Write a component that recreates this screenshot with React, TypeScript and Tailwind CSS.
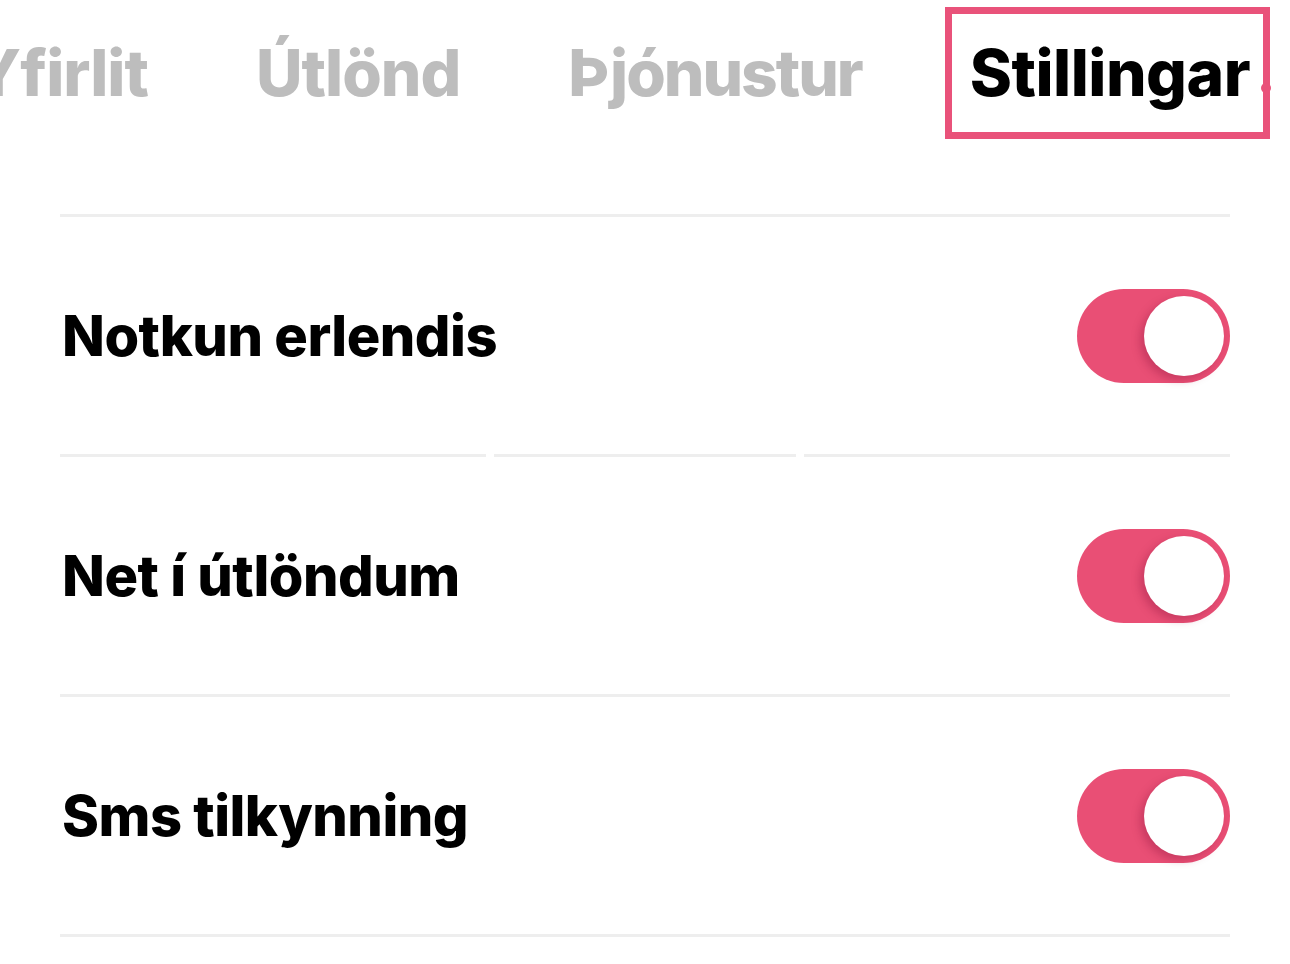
const tabs = [
  { label: "Yfirlit", active: false, tracking: "tracking-[-1px]" },
  { label: "Útlönd", active: false, tracking: "tracking-[-1px]" },
  { label: "Þjónustur", active: false, tracking: "tracking-[-2px]" },
  { label: "Stillingar", active: true, tracking: "tracking-[-0.5px]" },
];

const settings = ["Notkun erlendis", "Net í útlöndum", "Sms tilkynning"];

const Toggle = () => (
  <div className="flex h-[94px] w-[153px] flex-shrink-0 items-center justify-end rounded-full bg-[#e94f75] pr-[6px]">
    <div className="h-[80px] w-[80px] rounded-full bg-white shadow-[-4px_4px_9px_rgba(140,20,60,0.35)]" />
  </div>
);

const Divider = () => <div className="h-[3px] w-full bg-[#eeeeee]" />;

export default function App() {
  return (
    <div
      className="h-[964px] w-[1290px] overflow-hidden bg-white"
      style={{ fontFamily: "Inter, 'Noto Sans', sans-serif" }}
    >
      <nav className="flex justify-end gap-[63px] overflow-hidden pt-[7px] pr-[20px]">
        {tabs.map((tab, index) => (
          <div
            key={index}
            className={`relative flex h-[132px] flex-shrink-0 items-center border-[7px] pl-[18px] pr-[13px] ${
              tab.active ? "border-[#e9527a]" : "border-transparent"
            }`}
          >
            <span
              className={`whitespace-nowrap text-[64px] font-extrabold leading-none ${tab.tracking} ${
                tab.active ? "text-black" : "text-[#bdbdbd]"
              }`}
            >
              {tab.label}
            </span>
            {tab.active && (
              <span className="absolute right-[-8px] top-[69px] h-[10px] w-[10px] rounded-full bg-[#e9527a]" />
            )}
          </div>
        ))}
      </nav>

      <div className="mt-[75px] px-[60px]">
        <Divider />
        {settings.map((label, index) => (
          <div key={index}>
            <div className="flex h-[237px] items-center justify-between">
              <p className="pl-[2px] text-[56px] font-extrabold tracking-[-0.5px] text-black">
                {label}
              </p>
              <Toggle />
            </div>
            {index === 0 ? (
              <div className="flex gap-[8px]">
                <div className="h-[3px] w-[426px] bg-[#eeeeee]" />
                <div className="h-[3px] flex-1 bg-[#eeeeee]" />
                <div className="h-[3px] w-[426px] bg-[#eeeeee]" />
              </div>
            ) : (
              <Divider />
            )}
          </div>
        ))}
      </div>
    </div>
  );
}
